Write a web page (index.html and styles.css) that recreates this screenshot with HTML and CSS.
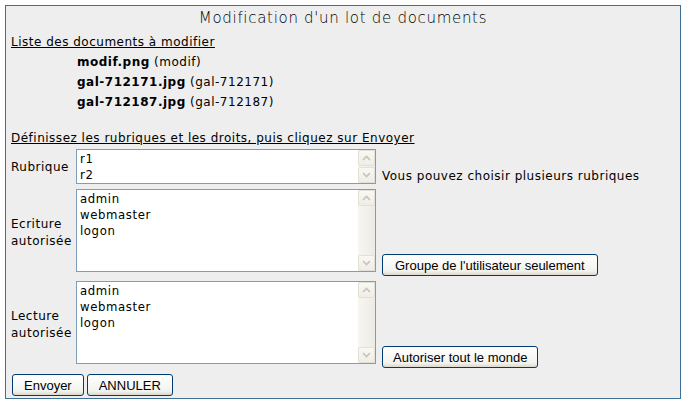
FILE: index.html
```html
<!DOCTYPE html>
<html lang="fr">
<head>
  <meta charset="UTF-8">
  <meta name="viewport" content="width=device-width, initial-scale=1.0">
  <title>Modification d'un lot de documents</title>
  <link rel="stylesheet" href="styles.css">
</head>
<body>

  <div class="panel">
    <h1 class="title">Modification d'un lot de documents</h1>

    <p class="section-head">Liste des documents à modifier</p>
    <ul class="doc-list">
      <li><b>modif.png</b> (modif)</li>
      <li><b>gal-712171.jpg</b> (gal-712171)</li>
      <li><b>gal-712187.jpg</b> (gal-712187)</li>
    </ul>

    <p class="section-head spaced">Définissez les rubriques et les droits, puis cliquez sur Envoyer</p>

    <form class="rights-form" onsubmit="return false;">
      <div class="rights-grid">
        <label class="field-label">Rubrique</label>
        <div class="listbox" role="listbox" aria-multiselectable="true">
          <div class="options">
            <div>r1</div>
            <div>r2</div>
          </div>
          <div class="scrollbar">
            <div class="scroll-btn"><svg width="9" height="6" viewBox="0 0 9 6"><polyline points="1,5 4.5,1.5 8,5"/></svg></div>
            <div class="track"></div>
            <div class="scroll-btn"><svg width="9" height="6" viewBox="0 0 9 6"><polyline points="1,1 4.5,4.5 8,1"/></svg></div>
          </div>
        </div>
        <span class="hint">Vous pouvez choisir plusieurs rubriques</span>

        <label class="field-label">Ecriture<br>autorisée</label>
        <div class="listbox tall" role="listbox" aria-multiselectable="true">
          <div class="options">
            <div>admin</div>
            <div>webmaster</div>
            <div>logon</div>
          </div>
          <div class="scrollbar">
            <div class="scroll-btn"><svg width="9" height="6" viewBox="0 0 9 6"><polyline points="1,5 4.5,1.5 8,5"/></svg></div>
            <div class="track"></div>
            <div class="scroll-btn"><svg width="9" height="6" viewBox="0 0 9 6"><polyline points="1,1 4.5,4.5 8,1"/></svg></div>
          </div>
        </div>
        <div class="side-action">
          <button type="button" class="xp-button">Groupe de l'utilisateur seulement</button>
        </div>

        <label class="field-label">Lecture<br>autorisée</label>
        <div class="listbox tall" role="listbox" aria-multiselectable="true">
          <div class="options">
            <div>admin</div>
            <div>webmaster</div>
            <div>logon</div>
          </div>
          <div class="scrollbar">
            <div class="scroll-btn"><svg width="9" height="6" viewBox="0 0 9 6"><polyline points="1,5 4.5,1.5 8,5"/></svg></div>
            <div class="track"></div>
            <div class="scroll-btn"><svg width="9" height="6" viewBox="0 0 9 6"><polyline points="1,1 4.5,4.5 8,1"/></svg></div>
          </div>
        </div>
        <div class="side-action">
          <button type="button" class="xp-button all-button">Autoriser tout le monde</button>
        </div>
      </div>

      <div class="actions">
        <button type="submit" class="xp-button send-button">Envoyer</button>
        <button type="button" class="xp-button cancel-button">ANNULER</button>
      </div>
    </form>
  </div>

</body>
</html>
```

FILE: styles.css
```css
body {
  margin: 5px;
  background-color: #fff;
  font-family: "DejaVu Sans", Verdana, sans-serif;
  font-size: 12px;
  letter-spacing: 0.5px;
  color: #000;
}
.panel {
  border: 1px solid #3c7096;
  background-color: #eeeeee;
  padding: 0 5px 2px;
}
.title {
  margin: 0;
  padding-bottom: 2px;
  font-size: 15px;
  font-weight: 200;
  letter-spacing: 0.7px;
  line-height: 24px;
  text-align: center;
}
.section-head {
  margin: 0;
  line-height: 20px;
  text-decoration: underline;
}
.section-head.spaced {
  margin-top: 16px;
}
.doc-list {
  list-style: none;
  margin: 0;
  padding: 0 0 0 66px;
  line-height: 20px;
}
.rights-grid {
  display: grid;
  grid-template-columns: 59px 300px auto;
  grid-template-rows: 36px 88px 88px;
  column-gap: 6px;
  row-gap: 4px;
  margin-top: 1px;
}
.field-label {
  align-self: center;
  line-height: 17px;
}
.listbox {
  display: flex;
  width: 300px;
  box-sizing: border-box;
  height: 35px;
  border: 1px solid #7f9db9;
  background-color: #fff;
}
.listbox.tall {
  height: 83px;
}
.options {
  flex: 1;
  padding: 1px 3px;
  font-family: "DejaVu Sans Condensed", "DejaVu Sans", sans-serif;
  font-size: 13px;
  letter-spacing: 0.6px;
  line-height: 16px;
}
.scrollbar {
  width: 17px;
  display: flex;
  flex-direction: column;
  background: linear-gradient(to right, #f7f6f1, #ecebe4);
}
.scroll-btn {
  height: 16px;
  box-sizing: border-box;
  display: flex;
  align-items: center;
  justify-content: center;
  border: 1px solid #e3e0d6;
  border-radius: 2px;
  background: linear-gradient(#f9f8f4, #efede6);
}
.scroll-btn polyline {
  fill: none;
  stroke: #c6c3b8;
  stroke-width: 1.6;
}
.track {
  flex: 1;
}
.hint {
  align-self: end;
  line-height: 16px;
  margin-bottom: 1px;
}
.side-action {
  align-self: end;
  margin-bottom: 1px;
}
.xp-button {
  height: 22px;
  padding: 0 12px;
  border: 1px solid #003c74;
  border-radius: 3px;
  background: linear-gradient(#ffffff, #f3f3ee 80%, #dcd8cc);
  font-family: "Liberation Sans", Arial, sans-serif;
  font-size: 13px;
  letter-spacing: 0;
  color: #000;
  cursor: pointer;
}
.all-button {
  padding: 0 10px;
}
.actions {
  display: flex;
  gap: 3px;
  margin-top: 5px;
  padding-left: 1px;
}
.send-button {
  padding: 0 11px;
}
.cancel-button {
  padding: 0 11px;
}
```
